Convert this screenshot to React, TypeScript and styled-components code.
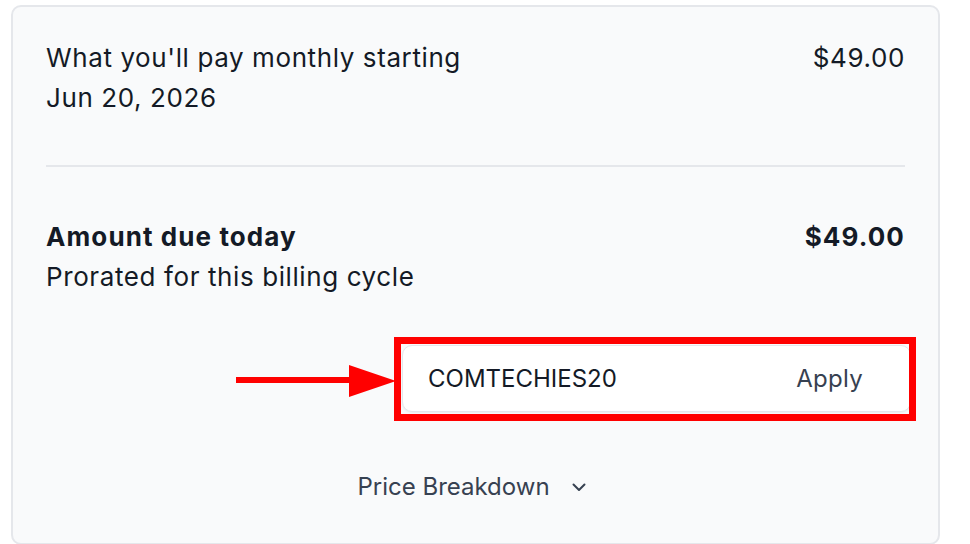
import styled, { createGlobalStyle } from "styled-components";

export default function App() {
  return (
    <>
      <GlobalStyle />
      <Card>
        <Row>
          <Label>
            What you'll pay monthly starting
            <br />
            Jun 20, 2026
          </Label>
          <Amount>$49.00</Amount>
        </Row>
        <Divider />
        <Row>
          <Label>
            <Strong>Amount due today</Strong>
            <br />
            Prorated for this billing cycle
          </Label>
          <Amount bold>$49.00</Amount>
        </Row>
        <PromoRow>
          <PromoBox>
            <PromoInput defaultValue="COMTECHIES20" aria-label="Promo code" />
            <ApplyButton>Apply</ApplyButton>
            <Highlight />
            <Arrow width="160" height="34" viewBox="0 0 160 34">
              <rect x="0" y="13" width="116" height="6" fill="#ff0000" />
              <polygon points="113,1 160,17 113,33" fill="#ff0000" />
            </Arrow>
          </PromoBox>
        </PromoRow>
        <BreakdownRow>
          <BreakdownButton>
            Price Breakdown
            <svg width="14" height="9" viewBox="0 0 14 9" fill="none">
              <path d="M1.5 1.5 L7 7 L12.5 1.5" stroke="#374151" strokeWidth="2" strokeLinecap="round" strokeLinejoin="round" />
            </svg>
          </BreakdownButton>
        </BreakdownRow>
      </Card>
    </>
  );
}

const GlobalStyle = createGlobalStyle`
  body {
    margin: 0;
    background: #ffffff;
    font-family: Inter, "Noto Sans", sans-serif;
    color: #111827;
  }
`;

const Card = styled.div`
  box-sizing: border-box;
  margin: 5px 0 0 11px;
  width: 929px;
  height: 540px;
  padding: 31px 33px 0;
  background: #f9fafb;
  border: 2px solid #e5e7eb;
  border-radius: 10px;
`;

const Row = styled.div`
  display: flex;
  justify-content: space-between;
  align-items: flex-start;
  font-size: 26px;
  line-height: 40px;
  letter-spacing: 0.6px;
`;

const Label = styled.div`
  color: #141a26;
`;

const Strong = styled.span`
  font-weight: 700;
  letter-spacing: 1.1px;
`;

const Amount = styled.div<{ bold?: boolean }>`
  font-weight: ${p => (p.bold ? 700 : 400)};
  letter-spacing: ${p => (p.bold ? "1.1px" : "0.6px")};
  color: #141a26;
`;

const Divider = styled.hr`
  margin: 47px 0 50px;
  border: none;
  border-top: 2px solid #e5e7eb;
`;

const PromoRow = styled.div`
  display: flex;
  justify-content: flex-end;
  margin: 48px -6px 0 0;
`;

const PromoBox = styled.div`
  position: relative;
  box-sizing: border-box;
  display: flex;
  align-items: center;
  width: 509px;
  height: 67px;
  padding: 0 47px 0 25px;
  background: #ffffff;
  border: 1.5px solid #e5e7eb;
  border-radius: 10px;
  box-shadow: 0 1px 2px rgba(0, 0, 0, 0.06);
`;

const PromoInput = styled.input`
  flex: 1;
  min-width: 0;
  border: none;
  outline: none;
  background: transparent;
  padding: 0;
  font-family: Inter, "Noto Sans", sans-serif;
  font-size: 24px;
  color: #141a26;
`;

const ApplyButton = styled.button`
  border: none;
  background: transparent;
  padding: 0;
  font-family: Inter, "Noto Sans", sans-serif;
  font-size: 24px;
  letter-spacing: 0.3px;
  color: #374151;
  cursor: pointer;
`;

const Highlight = styled.div`
  position: absolute;
  top: -9px;
  left: -9px;
  right: -6px;
  bottom: -10px;
  border: 7px solid #ff0000;
  pointer-events: none;
`;

const Arrow = styled.svg`
  position: absolute;
  top: 18px;
  left: -167px;
`;

const BreakdownRow = styled.div`
  display: flex;
  justify-content: center;
  margin-top: 55px;
  padding-right: 8px;
`;

const BreakdownButton = styled.button`
  display: flex;
  align-items: center;
  gap: 22px;
  border: none;
  background: transparent;
  padding: 0;
  font-family: Inter, "Noto Sans", sans-serif;
  font-size: 24px;
  line-height: 40px;
  color: #374151;
  cursor: pointer;
`;
